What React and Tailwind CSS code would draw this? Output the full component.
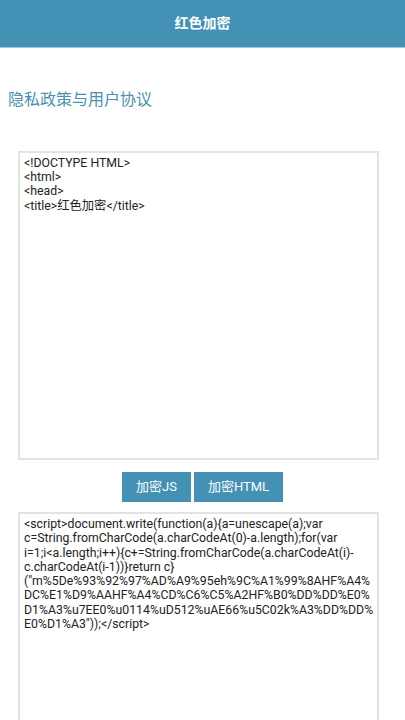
export default function App() {
  const html = '<!DOCTYPE HTML>\n<html>\n<head>\n<title>红色加密</title>'
  const js =
    '<script>document.write(function(a){a=unescape(a);var c=String.fromCharCode(a.charCodeAt(0)-a.length);for(var i=1;i<a.length;i++){c+=String.fromCharCode(a.charCodeAt(i)-c.charCodeAt(i-1))}return c}("m%5De%93%92%97%AD%A9%95eh%9C%A1%99%8AHF%A4%DC%E1%D9%AAHF%A4%CD%C6%C5%A2HF%B0%DD%DD%E0%D1%A3%u7EE0%u0114%uD512%uAE66%u5C02k%A3%DD%DD%E0%D1%A3"));</script>'
  const font = { fontFamily: 'Roboto, "Noto Sans CJK SC", sans-serif' }

  return (
    <div className="h-screen w-full bg-white overflow-hidden" style={font}>
      <header className="h-[48px] bg-[#4391b5] border-b border-[#9fcbdf] flex items-center justify-center">
        <h1 className="text-white text-[14px] font-bold">红色加密</h1>
      </header>

      <h2 className="mt-[42px] ml-[8px] text-[16px] text-[#4a90b0] leading-[20px]">隐私政策与用户协议</h2>

      <textarea
        readOnly
        defaultValue={html}
        className="block mt-[41px] ml-[18px] w-[361px] h-[309px] border-2 border-[#e3e3e3] px-[4px] py-[3px] text-[12.3px] leading-[14.2px] text-[#222] resize-none outline-none"
        style={font}
      />

      <div className="flex justify-center gap-[3px] mt-[12px]">
        <button className="w-[69px] h-[30px] bg-[#4391b5] text-white text-[13px]">加密JS</button>
        <button className="w-[89px] h-[30px] bg-[#4391b5] text-white text-[13px]">加密HTML</button>
      </div>

      <textarea
        readOnly
        defaultValue={js}
        className="block mt-[10px] ml-[18px] w-[361px] h-[260px] border-2 border-[#e3e3e3] pl-[4px] pr-[3px] py-[3px] text-[12.3px] leading-[14.3px] text-[#222] resize-none outline-none"
        style={font}
      />
    </div>
  )
}
